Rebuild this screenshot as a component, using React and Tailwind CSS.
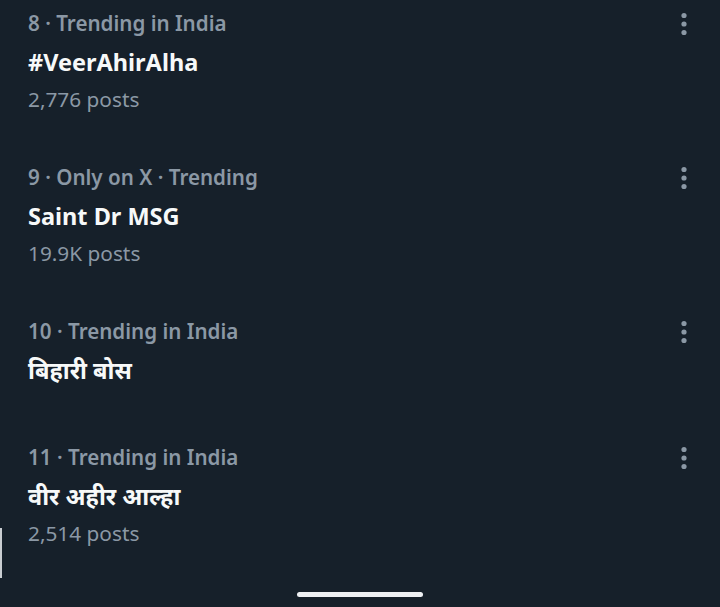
const trends = [
  { meta: "8 · Trending in India", title: "#VeerAhirAlha", posts: "2,776 posts" },
  { meta: "9 · Only on X · Trending", title: "Saint Dr MSG", posts: "19.9K posts" },
  { meta: "10 · Trending in India", title: "बिहारी बोस" },
  { meta: "11 · Trending in India", title: "वीर अहीर आल्हा", posts: "2,514 posts" },
];

function Dots() {
  return (
    <svg width="8" height="24" viewBox="0 0 8 24" className="text-[#8b98a5]">
      <circle cx="4" cy="3.5" r="2.6" fill="currentColor" />
      <circle cx="4" cy="12" r="2.6" fill="currentColor" />
      <circle cx="4" cy="20.5" r="2.6" fill="currentColor" />
    </svg>
  );
}

export default function App() {
  return (
    <div
      className="relative w-[720px] h-[607px] overflow-hidden bg-[#16202a] flex flex-col"
      style={{ fontFamily: '"Noto Sans", "Open Sans", sans-serif' }}
    >
      {trends.map((t) => (
        <div
          key={t.meta}
          className={`flex items-start justify-between pl-[28px] pr-[32px] pt-[9px] ${
            t.posts ? "pb-[41px]" : "pb-[49px]"
          }`}
        >
          <div className="flex flex-col">
            <span className="text-[20.6px] leading-[28px] font-semibold text-[#8b98a5]">{t.meta}</span>
            <span className="mt-[10px] text-[23.5px] leading-[30px] font-bold text-[#f7f9f9]">
              {t.title}
            </span>
            {t.posts && (
              <span className="mt-[8px] text-[20.8px] leading-[28px] text-[#8b98a5]">{t.posts}</span>
            )}
          </div>
          <div className="pt-[3px]">
            <Dots />
          </div>
        </div>
      ))}
      <div className="absolute left-0 top-[528px] w-[2px] h-[50px] bg-[#c9cdd1]" />
      <div className="absolute left-[297px] top-[592px] w-[126px] h-[5px] rounded-full bg-[#eef0f3]" />
    </div>
  );
}
